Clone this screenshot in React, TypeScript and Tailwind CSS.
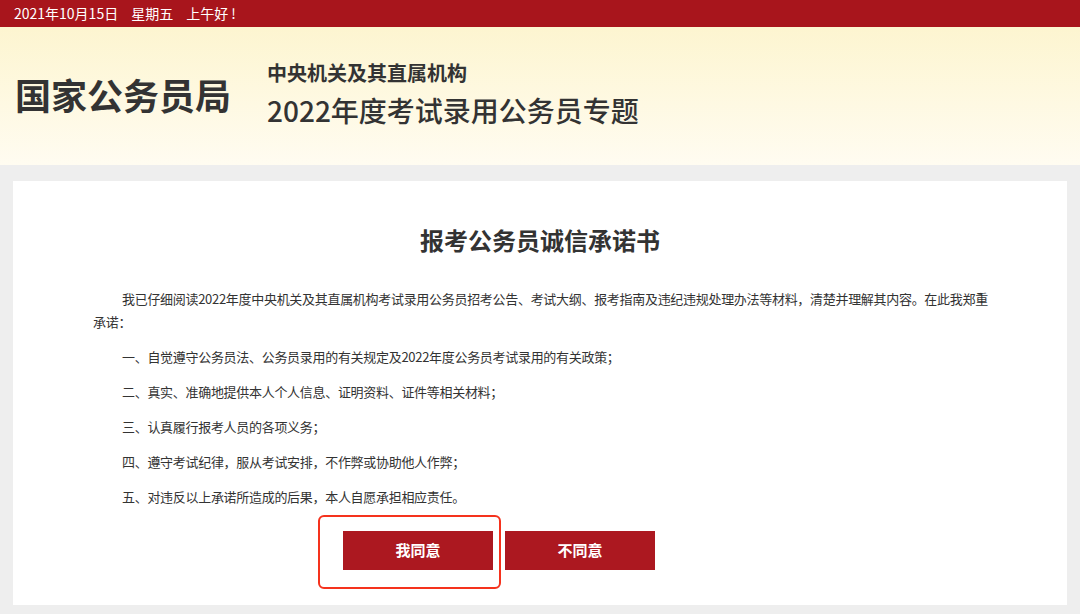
import React from "react";

const font = { fontFamily: '"Noto Sans CJK SC", "Noto Sans", sans-serif' };

export default function App() {
  const items = [
    "一、自觉遵守公务员法、公务员录用的有关规定及2022年度公务员考试录用的有关政策；",
    "二、真实、准确地提供本人个人信息、证明资料、证件等相关材料；",
    "三、认真履行报考人员的各项义务；",
    "四、遵守考试纪律，服从考试安排，不作弊或协助他人作弊；",
    "五、对违反以上承诺所造成的后果，本人自愿承担相应责任。",
  ];
  return (
    <div style={font} className="w-[1080px] h-[614px] overflow-hidden bg-[#eeeeee] text-[#333333]">
      <div className="h-[27px] bg-[#a8151c] pl-[14px] text-[14px] leading-[27px] text-white flex gap-[13px]">
        <span>2021年10月15日</span>
        <span>星期五</span>
        <span>上午好 !</span>
      </div>
      <div className="h-[138px] bg-gradient-to-b from-[#fdf5d0] to-[#fffcf1] flex items-center pl-[15px]">
        <div className="text-[36px] leading-[44px] font-bold text-[#333333] mt-[-4px]">国家公务员局</div>
        <div className="ml-[36px] flex flex-col mt-[-5px]">
          <div className="text-[20px] leading-[26px] font-bold text-[#333333]">中央机关及其直属机构</div>
          <div className="text-[28px] leading-[36px] font-medium text-[#333333] mt-[6px]">2022年度考试录用公务员专题</div>
        </div>
      </div>
      <div className="pt-[16px] px-[13px]">
        <div className="bg-white h-[424px] pt-[43px] pl-[80px] pr-[78px]">
          <h1 className="text-center text-[24px] leading-[32px] font-bold text-[#333333] mr-[2px]">报考公务员诚信承诺书</h1>
          <p className="mt-[31px] text-[13px] leading-[23px] indent-[29px] tracking-[-0.3px] text-[#333333]">
            我已仔细阅读2022年度中央机关及其直属机构考试录用公务员招考公告、考试大纲、报考指南及违纪违规处理办法等材料，清楚并理解其内容。在此我郑重承诺：
          </p>
          {items.map((t) => (
            <p key={t} className="mt-[12px] text-[13px] leading-[23px] pl-[29px] tracking-[-0.3px] text-[#333333]">
              {t}
            </p>
          ))}
          <div className="mt-[23px] ml-[250px] flex gap-[12px]">
            <div className="relative">
              <button className="w-[150px] h-[39px] bg-[#ac1820] text-white text-[15px] font-bold">我同意</button>
              <div className="absolute left-[-25px] top-[-16px] w-[183px] h-[74px] border-[2.5px] border-[#f5321d] rounded-[6px] pointer-events-none" />
            </div>
            <button className="w-[150px] h-[39px] bg-[#ac1820] text-white text-[15px] font-bold">不同意</button>
          </div>
        </div>
      </div>
    </div>
  );
}
